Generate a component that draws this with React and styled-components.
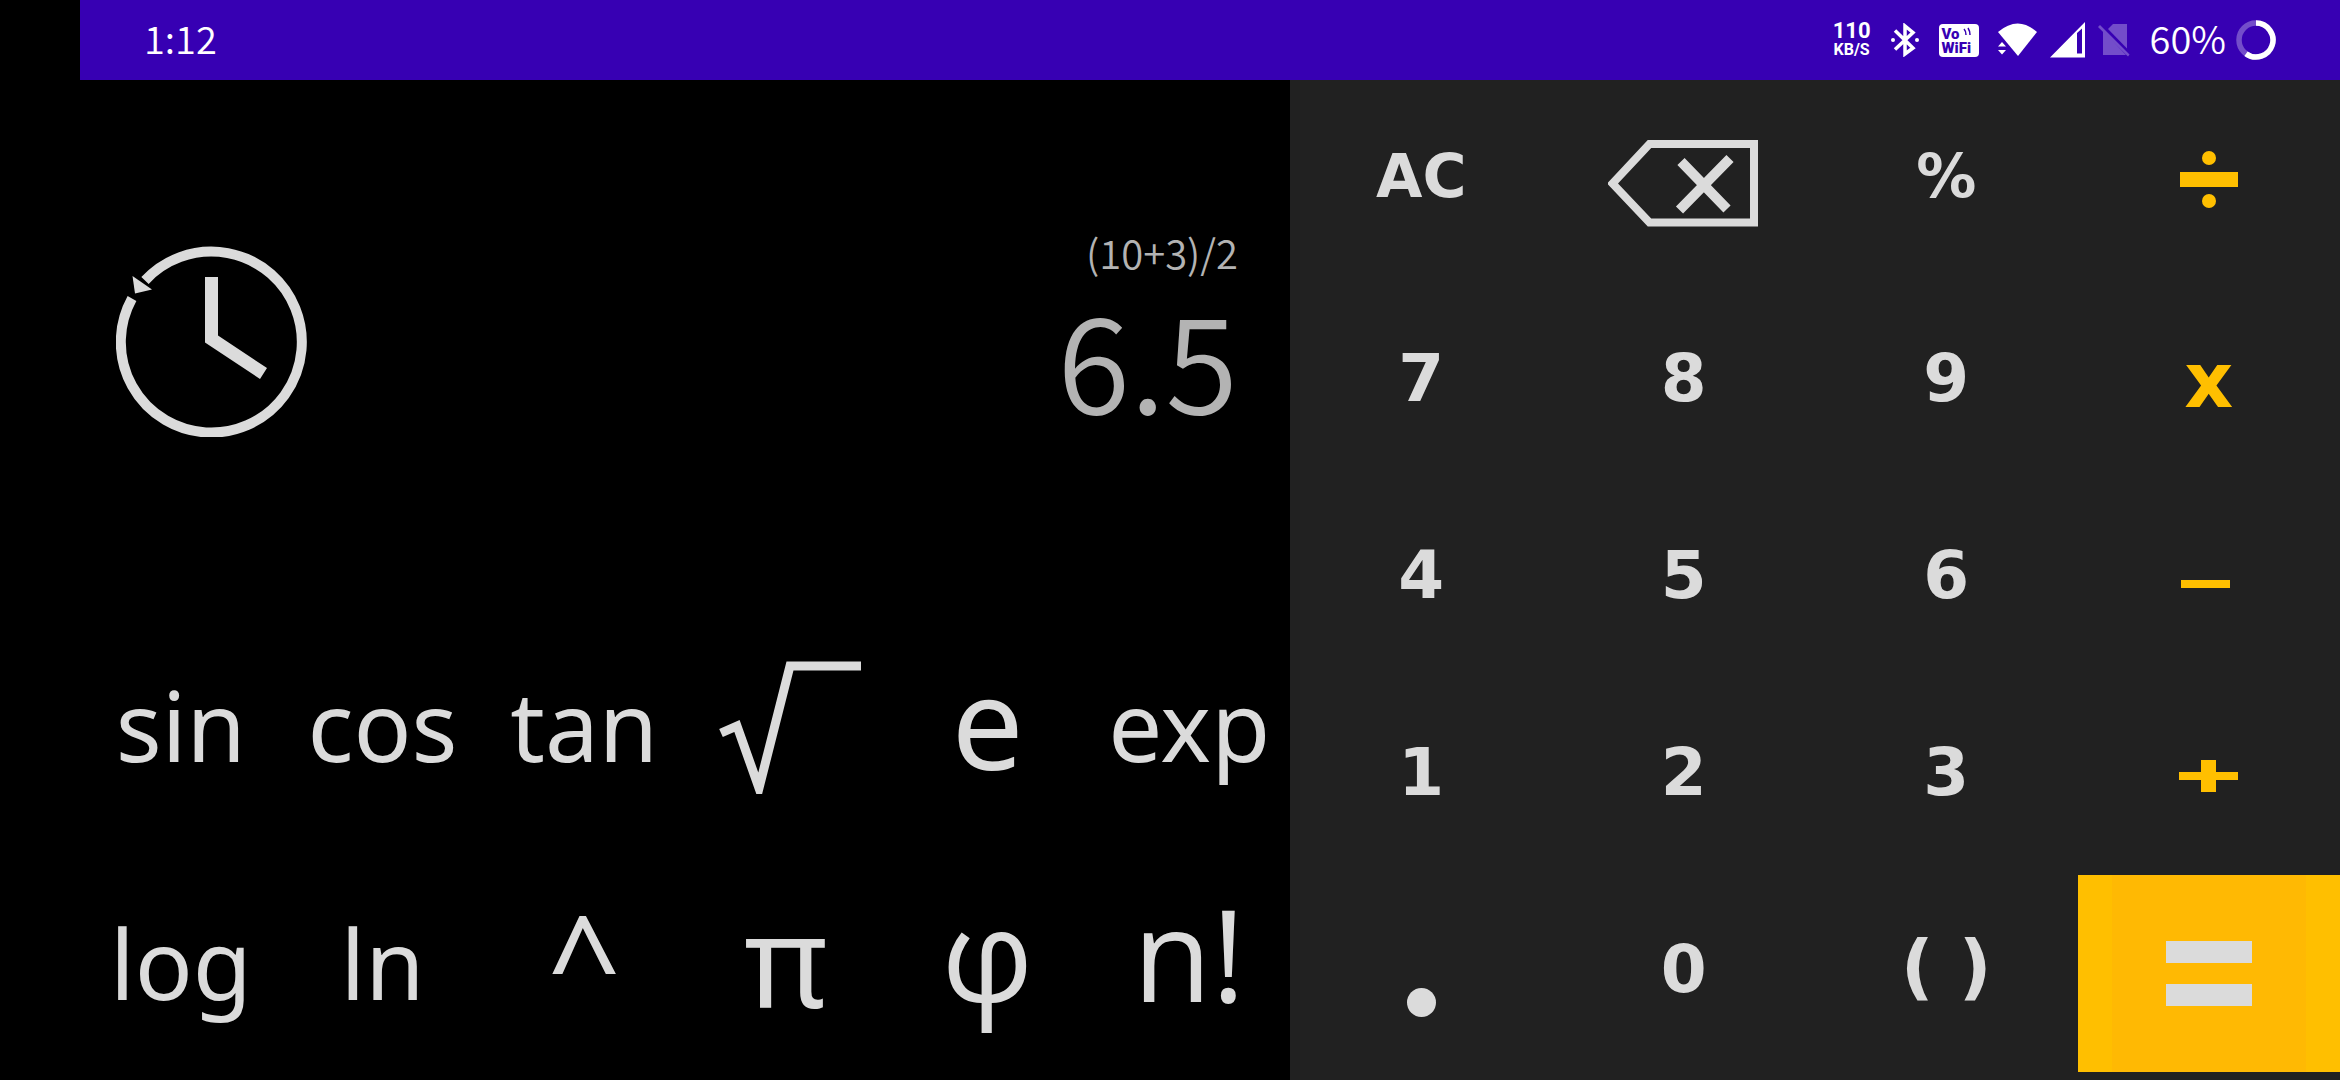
import React from "react";
import styled, { createGlobalStyle, css } from "styled-components";

const GlobalStyle = createGlobalStyle`
  *, *::before, *::after { box-sizing: border-box; }
  body { margin: 0; background: #000; }
`;

const SYSTEM_FONT = `"Noto Sans CJK SC", "Noto Sans", sans-serif`;
const INK = "#dbdbdb";
const ACCENT = "#ffbf00";
const PURPLE = "#3700b3";

const Screen = styled.div`
  min-height: 100vh;
  padding-left: 80px;
  display: flex;
  flex-direction: column;
  background: #000;
`;

const StatusBar = styled.header`
  flex: none;
  height: 80px;
  padding: 0 64px;
  display: flex;
  align-items: center;
  justify-content: space-between;
  background: ${PURPLE};
  color: #fff;
`;

const StatusText = styled.span`
  padding-bottom: 4px;
  font-family: ${SYSTEM_FONT};
  font-weight: 350;
  font-size: 38px;
  line-height: 40px;
`;

const StatusIcons = styled.div`
  display: flex;
  align-items: center;
`;

const Gap = styled.div`
  margin-left: ${(p) => p.$before}px;
  display: flex;
  align-items: center;
`;

const NetSpeed = styled.div`
  display: flex;
  flex-direction: column;
  align-items: center;
  font-family: Roboto, sans-serif;
  font-weight: 700;
  font-size: 16px;
  line-height: 18px;
`;

const NetValue = styled.span`
  font-size: 22px;
  line-height: 20px;
`;

const WifiCalling = styled.div`
  width: 40px;
  height: 33px;
  padding: 3px;
  border-radius: 4px;
  background: #fff;
  color: ${PURPLE};
  font-family: Roboto, sans-serif;
  font-weight: 900;
  font-size: 15px;
  line-height: 14px;
`;

const WifiCallingLine = styled.div`
  display: flex;
  gap: 3px;
`;

const Body = styled.main`
  flex: 1;
  display: grid;
  grid-template-columns: 1210fr 1050fr;
`;

const Panel = styled.section`
  display: flex;
  flex-direction: column;
`;

const Display = styled.div`
  flex: 1;
  padding: 0 52px 0 36px;
  display: flex;
  align-items: center;
  justify-content: space-between;
`;

const Readout = styled.div`
  padding-bottom: 18px;
  display: flex;
  flex-direction: column;
  align-items: flex-end;
  color: #b3b3b3;
  font-family: ${SYSTEM_FONT};
  font-weight: 350;
`;

const Expression = styled.div`
  font-size: 40px;
  line-height: 50px;
`;

const Result = styled.output`
  font-size: 132px;
  line-height: 160px;
`;

const FunctionGrid = styled.div`
  padding-bottom: 2px;
  display: grid;
  grid-template-columns: repeat(6, 1fr);
  grid-auto-rows: 238px;
`;

const PlainButton = styled.button`
  margin: 0;
  padding: 0;
  border: 0;
  background: none;
  color: ${INK};
  cursor: pointer;
  display: flex;
  align-items: center;
  justify-content: center;
  white-space: pre;
  min-width: 0;
`;

const functionSizes = {
  word: css`
    font-size: 96px;
    padding-top: 8px;
  `,
  symbol: css`
    font-size: 128px;
  `,
  tall: css`
    font-family: "Open Sans", "Noto Sans", sans-serif;
    font-size: 128px;
    padding-bottom: 12px;
  `,
};

const FunctionKey = styled(PlainButton)`
  font-family: "Noto Sans", sans-serif;
  font-weight: 400;
  line-height: 1;
  ${(p) => functionSizes[p.$kind]}
`;

const Keypad = styled.section`
  padding: 7px 0 8px;
  display: grid;
  grid-template-columns: repeat(4, 1fr);
  grid-template-rows: repeat(5, 1fr);
  background: #212121;
`;

const keyKinds = {
  digit: css`
    font-size: 66px;
    padding-bottom: 8px;
  `,
  command: css`
    font-size: 60px;
    padding-bottom: 20px;
  `,
  symbol: css`
    font-size: 72px;
    padding-bottom: 16px;
  `,
  operator: css`
    font-size: 76px;
    padding-bottom: 4px;
    color: ${ACCENT};
  `,
  icon: css``,
  equals: css`
    background: linear-gradient(
      to right,
      ${ACCENT} 13%,
      #ffb903 13%,
      #ffb903 87%,
      ${ACCENT} 87%
    );
  `,
};

const Key = styled(PlainButton)`
  font-family: "DejaVu Sans", sans-serif;
  font-weight: 700;
  line-height: 1;
  ${(p) => keyKinds[p.$kind]}
`;

const HistoryIcon = () => (
  <svg width="191" height="191" viewBox="0 0 191 191" aria-hidden="true">
    <path
      d="M29 34.500A90.500 90.500 0 1 1 16 52.500"
      fill="none"
      stroke={INK}
      strokeWidth="10"
    />
    <path d="M16.500 30L36 43.500L19 47.500Z" fill={INK} />
    <path d="M89 31H102V89.500L151 122L144 133L89 96.500Z" fill={INK} />
  </svg>
);

const RootIcon = () => (
  <svg width="150" height="146" viewBox="0 0 150 146" aria-hidden="true">
    <path d="M10 85L26 78L48 140L79 18H150" fill="none" stroke={INK} strokeWidth="9" />
  </svg>
);

const BackspaceIcon = () => (
  <svg width="152" height="92" viewBox="0 0 152 92" aria-hidden="true">
    <path
      d="M41.500 4H146V82.500H41.500L4.500 43.500Z"
      fill="none"
      stroke={INK}
      strokeWidth="8"
    />
    <path d="M73 21.500L119 69M122 18.500L71.500 70" stroke={INK} strokeWidth="10" />
  </svg>
);

const DivideIcon = () => (
  <svg width="58" height="72" viewBox="0 0 58 72" aria-hidden="true" fill={ACCENT}>
    <circle cx="29" cy="8" r="7" />
    <rect y="22" width="58" height="15" />
    <circle cx="29" cy="51" r="7" />
  </svg>
);

const MinusIcon = () => (
  <svg width="56" height="16" viewBox="0 0 56 16" aria-hidden="true" fill={ACCENT}>
    <rect y="8" width="49" height="8" />
  </svg>
);

const PlusIcon = () => (
  <svg width="59" height="34" viewBox="0 0 59 34" aria-hidden="true" fill={ACCENT}>
    <rect y="12" width="59" height="8" />
    <rect x="22" width="15" height="32" />
  </svg>
);

const EqualsIcon = () => (
  <svg width="86" height="65" viewBox="0 0 86 65" aria-hidden="true" fill={INK}>
    <rect width="86" height="22" />
    <rect y="43" width="86" height="22" />
  </svg>
);

const PointIcon = () => (
  <svg width="29" height="86" viewBox="0 0 29 86" aria-hidden="true" fill={INK}>
    <circle cx="14.500" cy="71.500" r="14.500" />
  </svg>
);

const BluetoothIcon = () => (
  <svg width="28" height="34" viewBox="0 0 28 34" aria-hidden="true">
    <path
      d="M4 7.500L22 25L14 31V3L22 9.500L4 26.500"
      fill="none"
      stroke="#fff"
      strokeWidth="3.500"
    />
    <circle cx="2" cy="17" r="2" fill="#fff" />
    <circle cx="26" cy="17" r="2" fill="#fff" />
  </svg>
);

const CallWavesIcon = () => (
  <svg width="8" height="10" viewBox="0 0 8 10" aria-hidden="true">
    <path d="M1 2Q3 4 3 8M5 1Q7 4 7 8" fill="none" stroke={PURPLE} strokeWidth="1.500" />
  </svg>
);

const WifiIcon = () => (
  <svg width="40" height="34" viewBox="0 0 40 34" aria-hidden="true" fill="#fff">
    <path d="M0 9Q20 -8 39 9L20 33Z" />
    <path d="M0 23.500L4 19L8 23.500ZM0 27H8L4 31.500Z" />
  </svg>
);

const SignalIcon = () => (
  <svg width="36" height="36" viewBox="0 0 36 36" aria-hidden="true">
    <path d="M0 35.500L35 0V35.500ZM27 11V31.500H32V6.500Z" fill="#fff" fillRule="evenodd" />
  </svg>
);

const NoSimIcon = () => (
  <svg width="32" height="34" viewBox="0 0 32 34" aria-hidden="true">
    <g fill="#fff" opacity="0.300">
      <path d="M10 6L15 1H29V25.500Z" />
      <path d="M5 7.500L28 32H5Z" />
      <path d="M0 4L2 2L31.500 31.500L30 33.500Z" />
    </g>
  </svg>
);

const BatteryRing = () => (
  <svg width="40" height="40" viewBox="0 0 40 40" aria-hidden="true">
    <g fill="none" strokeWidth="5.500">
      <circle cx="20" cy="20" r="17" stroke="#fff" strokeOpacity="0.300" />
      <path d="M20 3A17 17 0 1 1 10 33.750" stroke="#fff" />
    </g>
  </svg>
);

const functionKeys = [
  { kind: "word", label: "sin" },
  { kind: "word", label: "cos" },
  { kind: "word", label: "tan" },
  { kind: "symbol", name: "square root", label: <RootIcon /> },
  { kind: "symbol", label: "e" },
  { kind: "word", label: "exp" },
  { kind: "word", label: "log" },
  { kind: "word", label: "ln" },
  { kind: "symbol", label: "^" },
  { kind: "symbol", label: "π" },
  { kind: "tall", label: "φ" },
  { kind: "tall", label: "n!" },
];

const keys = [
  { kind: "command", label: "AC" },
  { kind: "icon", name: "backspace", label: <BackspaceIcon /> },
  { kind: "command", label: "%" },
  { kind: "icon", name: "divide", label: <DivideIcon /> },
  { kind: "digit", label: "7" },
  { kind: "digit", label: "8" },
  { kind: "digit", label: "9" },
  { kind: "operator", label: "x" },
  { kind: "digit", label: "4" },
  { kind: "digit", label: "5" },
  { kind: "digit", label: "6" },
  { kind: "icon", name: "subtract", label: <MinusIcon /> },
  { kind: "digit", label: "1" },
  { kind: "digit", label: "2" },
  { kind: "digit", label: "3" },
  { kind: "icon", name: "add", label: <PlusIcon /> },
  { kind: "icon", name: "decimal point", label: <PointIcon /> },
  { kind: "digit", label: "0" },
  { kind: "symbol", label: "( )" },
  { kind: "equals", name: "equals", label: <EqualsIcon /> },
];

export default function App() {
  return (
    <Screen>
      <GlobalStyle />
      <StatusBar>
        <StatusText>1:12</StatusText>
        <StatusIcons>
          <NetSpeed>
            <NetValue>110</NetValue>
            <span>KB/S</span>
          </NetSpeed>
          <Gap $before={20}>
            <BluetoothIcon />
          </Gap>
          <Gap $before={20}>
            <WifiCalling>
              <WifiCallingLine>
                Vo
                <CallWavesIcon />
              </WifiCallingLine>
              <WifiCallingLine>WiFi</WifiCallingLine>
            </WifiCalling>
          </Gap>
          <Gap $before={19}>
            <WifiIcon />
          </Gap>
          <Gap $before={12}>
            <SignalIcon />
          </Gap>
          <Gap $before={12}>
            <NoSimIcon />
          </Gap>
          <Gap $before={20}>
            <StatusText>60%</StatusText>
          </Gap>
          <Gap $before={10}>
            <BatteryRing />
          </Gap>
        </StatusIcons>
      </StatusBar>
      <Body>
        <Panel>
          <Display>
            <PlainButton type="button" aria-label="history">
              <HistoryIcon />
            </PlainButton>
            <Readout>
              <Expression>(10+3)/2</Expression>
              <Result>6.5</Result>
            </Readout>
          </Display>
          <FunctionGrid>
            {functionKeys.map((key, i) => (
              <FunctionKey key={i} type="button" $kind={key.kind} aria-label={key.name}>
                {key.label}
              </FunctionKey>
            ))}
          </FunctionGrid>
        </Panel>
        <Keypad>
          {keys.map((key, i) => (
            <Key key={i} type="button" $kind={key.kind} aria-label={key.name}>
              {key.label}
            </Key>
          ))}
        </Keypad>
      </Body>
    </Screen>
  );
}
